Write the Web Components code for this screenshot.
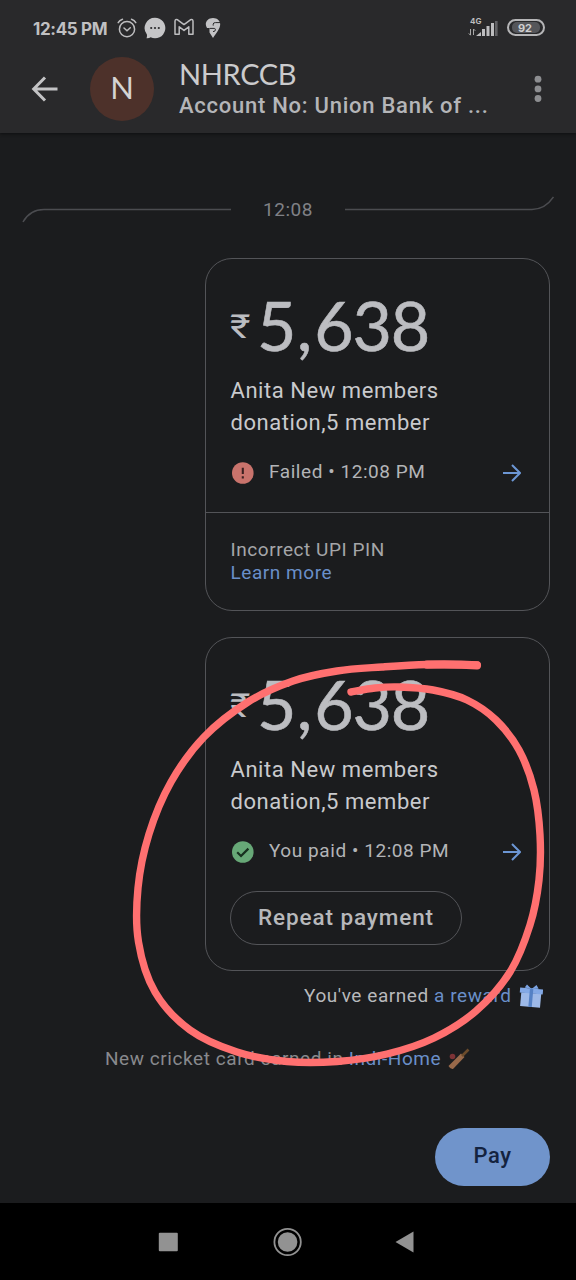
<!DOCTYPE html>
<html lang="en">
<head>
<meta charset="utf-8">
<title>NHRCCB</title>
<style>
html,body{margin:0;padding:0;background:#1b1c1e}
body{width:576px;height:1280px;overflow:hidden;font-family:Roboto,"Liberation Sans",sans-serif}
</style>
</head>
<body>
<pay-screen></pay-screen>
<script>
const define = (name, html) => customElements.define(name, class extends HTMLElement {
  constructor() {
    super();
    this.attachShadow({mode: 'open'}).innerHTML = html;
  }
});

/* Smooth curve through a list of points (Catmull-Rom as cubic segments). */
const smooth = p => {
  let d = `M${p[0]}`;
  for (let i = 0; i < p.length - 1; i++) {
    const a = p[i - 1] || p[i], b = p[i], c = p[i + 1], e = p[i + 2] || c;
    d += `C${b[0] + (c[0] - a[0]) / 6} ${b[1] + (c[1] - a[1]) / 6} ${c[0] - (e[0] - b[0]) / 6} ${c[1] - (e[1] - b[1]) / 6} ${c[0]} ${c[1]}`;
  }
  return d;
};

define('status-bar', `
<style>
:host{display:flex;height:56px;padding:0 31px 0 33px;box-sizing:border-box;align-items:center;color:#bdbdbf}
b{font:700 17px/20px Inter,sans-serif;letter-spacing:-.35px;width:75px;white-space:nowrap;color:#c0c0c2;margin-top:1px}
svg{display:block;flex:none}
.a{margin-left:9px}.g{flex:1}
.sig{display:grid;grid-template-columns:10px 20px;width:30px;margin-right:9px}
.net{font:700 8px/8px Inter,sans-serif;grid-column:1/3;padding-left:2px;margin-top:-2px;height:10px}
.bat{width:38px;height:17px;box-sizing:border-box;border:2px solid #b5b5b7;border-radius:9px;padding:1px 3px;display:flex;margin-top:-1px}
.bat span{flex:1;background:#55565a;border-radius:5px;font:700 11px/13px Inter,sans-serif;height:11px;text-align:center;color:#cfcfd1;padding-right:2px}
</style>
<b>12:45 PM</b>
<svg class="a" width="20" height="20" viewBox="0 0 20 20" fill="none" stroke="#bdbdbf" stroke-width="1.5" stroke-linecap="round"><circle cx="10" cy="11.2" r="7.6"/><path d="M7 10l3 2.7 3.3-3M1.2 4.6Q2.5 2.2 5.5 1.3M18.8 4.6Q17.5 2.2 14.5 1.3"/></svg>
<svg style="margin:-1px 0 0 7px" width="22" height="22" viewBox="0 0 22 22"><path d="M11 .7A10.3 10.3 0 1 1 6.6 20.3Q5 21.4 2.5 21.2Q3.2 20 2.9 17.4A10.3 10.3 0 0 1 11 .7Z" fill="#c5c5c7"/><g fill="#29292b"><circle cx="7.2" cy="11" r="1.1"/><circle cx="11" cy="11" r="1.1"/><circle cx="14.8" cy="11" r="1.1"/></g></svg>
<svg style="margin:-2px 0 0 8px" width="20" height="18" viewBox="0 0 20 18" fill="none" stroke="#bdbdbf" stroke-width="1.5" stroke-linejoin="round"><path d="M1 3.2Q1.2 .8 3.6 1.8L10 6.6 16.4 1.8Q18.8 .8 19 3.2V16.2H14.8V8.8L10 12.4 5.2 8.8V16.2H1Z"/></svg>
<svg style="margin:-1px 0 0 11px" width="16" height="22" viewBox="0 0 16 22"><path d="M8 1C3.6 1 .8 4 .8 7.3Q.8 9 2 11H4.5V15.5L8 21C11.5 16 15.2 11.5 15.2 7.3C15.2 4 12.4 1 8 1Z" fill="#c3c3c5"/><path d="M15.6 5.6H10.3Q8.2 5.6 8.2 7.2V8.6M4.6 11.4H9.3Q10.4 11.4 10.4 12.8Q10.4 14.6 8 14.6" fill="none" stroke="#29292b" stroke-width="1"/></svg>
<div class="g"></div>
<div class="sig"><span class="net">4G</span>
<svg width="10" height="11" viewBox="0 0 10 11" fill="none" stroke="#aaa" stroke-width="1" style="margin-top:-1px"><path d="M2.5 3V9M.8 7.4L2.5 9.3M5.5 9V3M5.5 3L7.3 4.8"/></svg>
<svg width="22" height="17" viewBox="0 0 22 17" style="margin-top:-7px;margin-left:-2px" fill="#bdbdbf"><path d="M0 16L5 12V16Z"/><rect x="6" y="9" width="3" height="7"/><rect x="10.5" y="6" width="3" height="10"/><rect x="15" y="3" width="3" height="13"/><rect x="19" y="1" width="2.6" height="15" fill="#626265"/></svg></div>
<div class="bat"><span>92</span></div>
`);

define('chat-header', `
<style>
:host{display:flex;height:78px;align-items:flex-start;box-sizing:border-box;padding:0 34.5px 0 31px}
.back{margin-top:19px;flex:none}
.av{width:64px;height:64px;border-radius:50%;background:#4d312a;margin:1px 0 0 31px;font:400 31px/60px Lato,sans-serif;color:#d5d3d3;text-align:center;flex:none}
.t{margin-left:25px;flex:1;min-width:0;white-space:nowrap}
.n{font:400 29px/34px Lato,sans-serif;color:#cbcbcd;margin-top:1px;letter-spacing:-.35px}
.s{font:500 22px/26px Roboto,sans-serif;color:#b4b5b8;letter-spacing:.74px;margin-top:1.6px}
.m{margin-top:19px;flex:none}
</style>
<svg class="back" width="28" height="28" viewBox="0 0 28 28" fill="none" stroke="#c3c3c5" stroke-width="3"><path d="M26.5 14H3M14 2.5L2.7 14 14 25.5"/></svg>
<div class="av">N</div>
<div class="t"><div class="n">NHRCCB</div><div class="s">Account No: Union Bank of ...</div></div>
<svg class="m" width="8" height="28" viewBox="0 0 8 28" fill="#8d8e91"><circle cx="4" cy="4.2" r="3.4"/><circle cx="4" cy="13.9" r="3.4"/><circle cx="4" cy="23.5" r="3.4"/></svg>
`);

define('time-divider', `
<style>
:host{display:flex;height:125px;box-sizing:border-box;padding:61px 22px 0;justify-content:space-between;align-items:flex-start}
span{font-size:19px;line-height:22px;letter-spacing:.5px;color:#808186;margin-top:5px;white-space:nowrap}
svg{display:block}
</style>
<svg width="209" height="32" fill="none" stroke="#4b4c50" stroke-width="1.5"><path d="M1 28Q8 15.5 22 15.5H209"/></svg>
<span>12:08</span>
<svg width="209" height="32" fill="none" stroke="#4b4c50" stroke-width="1.5"><path d="M0 15.5H187Q200 15.5 208.5 3"/></svg>
`);

define('go-arrow', `
<style>:host{display:block}svg{display:block}</style>
<svg width="18" height="18" viewBox="0 0 18 18" fill="none" stroke="#6c96d4" stroke-width="2"><path d="M0 9H16.5M9 1L17 9 9 17"/></svg>
`);

define('payment-card', `
<style>
:host{display:block;width:345px;box-sizing:border-box;border:1px solid #535458;border-radius:27px}
.amt{display:flex;height:116px;padding-left:24px;color:#bcbdc1;font-family:Lato,sans-serif;align-items:flex-start}
.r{width:27px;flex:none;margin-top:53px;transform:scaleX(1.2);transform-origin:0 0}
.r{font:400 33px/30px Roboto,"Noto Sans",sans-serif}
.v{font-size:68px;line-height:80px;margin-top:26px;letter-spacing:-1.2px;-webkit-text-stroke:.6px #bcbdc1}
.c{letter-spacing:2px;margin-left:1.5px}
.note{font-size:22px;line-height:32px;letter-spacing:.55px;color:#c9cacd;padding-left:24.5px}
.st{display:flex;align-items:center;height:67px;padding:0 28.5px 0 25px}
.st div{flex:1;font-size:19px;line-height:24px;letter-spacing:.56px;color:#b3b4b7;margin:-2px 0 0 15px;white-space:nowrap}
</style>
<div class="amt"><span class="r">₹</span><span class="v">5<span class="c">,</span>638</span></div>
<div class="note">Anita New members<br>donation,5 member</div>
<div class="st"><slot name="icon"></slot><div><slot name="status"></slot></div><go-arrow></go-arrow></div>
<slot></slot>
`);

define('error-note', `
<style>
:host{display:block;height:98px;box-sizing:border-box;border-top:1px solid #535458;padding:26.4px 24.5px 0;margin-top:6px;font-size:19px;line-height:22.6px;letter-spacing:.55px;color:#a5a6a9}
a{color:#6a8fc9}
</style>
Incorrect UPI PIN<br><a>Learn more</a>
`);

define('repeat-button', `
<style>
:host{display:block;width:232px;height:54px;box-sizing:border-box;border:1px solid #535458;border-radius:27px;margin:6px 0 25px 24px;text-align:center;font:500 22.5px/51px Roboto,sans-serif;color:#b7b8bb;letter-spacing:.9px}
</style><slot></slot>
`);

define('reward-lines', `
<style>
:host{display:block;font-size:19px;line-height:24px;letter-spacing:.56px;color:#b8b9bc;white-space:nowrap}
.l{display:flex;align-items:center;height:24px}
.r{justify-content:flex-end;padding-right:33px;margin-top:13px}
.c{padding-left:105px;margin-top:39px;color:#88898d}
a{color:#6a8fc9}
svg{display:block;margin-left:7.5px}
.c svg{margin-left:6px}
</style>
<div class="l r"><span>You've earned <a>a reward</a></span>
<svg width="24" height="24" viewBox="0 0 24 24"><g transform="rotate(5 12 12)"><path d="M2 9H22V23H2Z" fill="#9db9e8"/><path d="M.5 4.5H23.5V9.5H.5Z" fill="#83a9e6"/><path d="M10.3 4H13.7V23H10.3Z" fill="#5481c5"/><path d="M12 5L5 4 7 .8ZM12 5L19 4 16.5 .5Z" fill="#7ba3e2"/></g></svg></div>
<div class="l c"><span>New cricket card earned in <a>Indi-Home</a></span>
<svg width="24" height="24" viewBox="0 0 24 24"><circle cx="5.5" cy="9.5" r="2.8" fill="#7d3336"/><path d="M1.5 19L14 6.5 17.5 10 6 22Q3.5 22.5 1.5 19Z" fill="#98694a"/><path d="M15 9L21.5 2.5" stroke="#6b4b2b" stroke-width="2.6"/></svg></div>
`);

define('pay-button', `
<style>:host{display:block;width:115px;height:58px;border-radius:29px;background:#7094cb;color:#14233f;text-align:center;font:500 22px/55px Roboto,sans-serif;letter-spacing:.5px}</style><slot></slot>
`);

define('nav-bar', `
<style>:host{display:flex;height:77px;background:#000;align-items:center;padding-left:158px;box-sizing:border-box}svg{display:block}</style>
<svg width="20" height="20"><rect x=".8" y=".8" width="19" height="18.5" rx="1" fill="#929292"/></svg>
<svg width="30" height="30" viewBox="0 0 30 30" style="margin-left:95px"><circle cx="14.6" cy="15" r="13.2" fill="none" stroke="#929292" stroke-width="1.8"/><circle cx="14.6" cy="15" r="9.8" fill="#929292"/></svg>
<svg width="20" height="22" viewBox="0 0 20 22" style="margin-left:92px"><path d="M.5 11L18.5 .5V21.5Z" fill="#929292"/></svg>
`);

const stroke = [[477,665],[427,664.5],[382,667],[337,671],[293,681],[248,702],[204,737],[171,782],[149,834],[138,888],[138.5,942],[155,992],[190,1030],[237,1052],[287,1061.5],[337,1061.5],[387,1054],[434,1038],[476,1011],[510,972],[530,925],[539,880],[540,835],[534,790],[519,750],[496,720],[467,700],[433,690],[399,687],[375,688],[351,692]];

define('pen-mark', `
<style>:host{display:block;position:absolute;left:0;top:0;pointer-events:none}svg{display:block}</style>
<svg width="576" height="1280" fill="none" stroke="#ff7070" stroke-width="7.4" stroke-linecap="round" stroke-linejoin="round"><path d="${smooth(stroke)}"/><path stroke-width="8.2" d="M427 664.6Q455 664 477 665.3"/></svg>
`);

define('pay-screen', `
<style>
:host{display:flex;flex-direction:column;width:576px;height:1280px;position:relative;background:#1b1c1e;overflow:hidden}
.top{background:#29292b;height:133px;box-shadow:0 1px 3px #0e0f10;flex:none}
main{height:1070px;display:flex;flex-direction:column;flex:none}
payment-card{margin-left:205px}
payment-card+payment-card{margin-top:26px}
pay-button{margin:auto 26px 17px auto}
svg{display:block}
</style>
<div class="top"><status-bar></status-bar><chat-header></chat-header></div>
<main>
<time-divider></time-divider>
<payment-card><svg slot="icon" width="23" height="23" viewBox="0 0 23 23"><circle cx="11.8" cy="12" r="10.8" fill="#c9736c"/><path d="M11.8 6.7V13M11.8 15.2V17.4" stroke="#3b2020" stroke-width="2.1"/></svg><span slot="status">Failed • 12:08 PM</span><error-note></error-note></payment-card>
<payment-card><svg slot="icon" width="23" height="23" viewBox="0 0 23 23"><circle cx="11.8" cy="12" r="10.8" fill="#67a877"/><path d="M6.2 12.3L10 16 17.4 8.6" fill="none" stroke="#17301f" stroke-width="2.2"/></svg><span slot="status">You paid • 12:08 PM</span><repeat-button>Repeat payment</repeat-button></payment-card>
<reward-lines></reward-lines>
<pay-button>Pay</pay-button>
</main>
<nav-bar></nav-bar>
<pen-mark></pen-mark>
`);
</script>
</body>
</html>
